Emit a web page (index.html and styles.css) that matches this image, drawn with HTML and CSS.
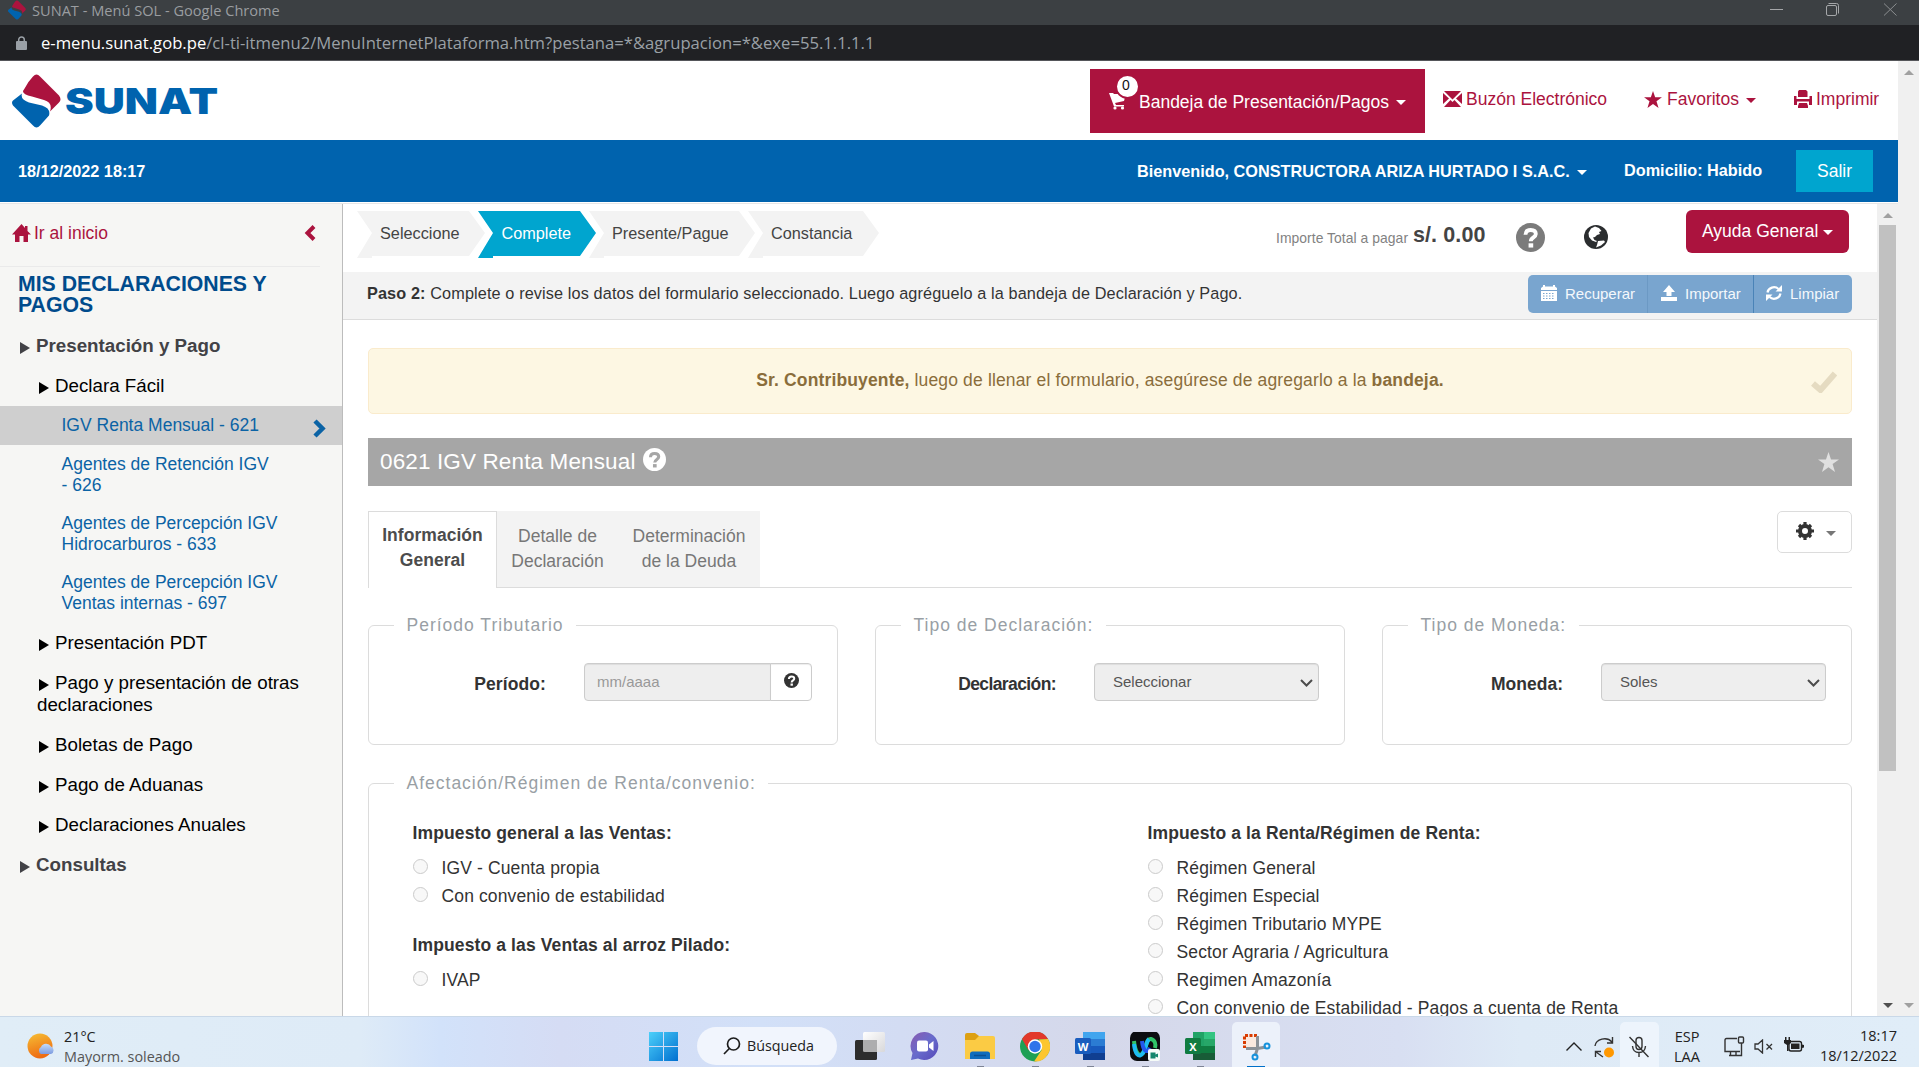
FILE: index.html
```html
<!DOCTYPE html>
<html lang="es">
<head>
<meta charset="utf-8">
<title>SUNAT - Menú SOL</title>
<link rel="stylesheet" href="styles.css">
</head>
<body>
<svg class="defs" width="0" height="0">
  <symbol id="drop" viewBox="0 0 49 53">
    <path fill="#ab133e" d="M12 15Q16 7 21 2Q24.500-2 28 2L47 21Q50 25 47 28L38 37Q41 28 32 25.500L20 22Q8 19 12 15Z"/>
    <path fill="#0063ae" d="M10 19Q8 25 17 28L30 31Q39 34 37 41L28 51Q24.500 55 21 51L1 31Q-1 28 1 26Z"/>
  </symbol>
  <symbol id="help" viewBox="0 0 30 30">
    <circle cx="15" cy="15" r="15" fill="currentColor"/>
    <path d="M9.800 12.200C9.800 8.800 12 7.200 15.200 7.200C18.400 7.200 20.500 8.800 20.500 11.500C20.500 15 15.300 14.800 15.300 19" fill="none" stroke="var(--hole)" stroke-width="4"/>
    <rect x="13" y="21" width="4.800" height="4.400" fill="var(--hole)"/>
  </symbol>
  <symbol id="star" viewBox="0 0 20 19">
    <path fill="currentColor" d="M10 0L12.400 7H20L13.900 11.500L16.200 19L10 14.500L3.800 19L6.100 11.500L0 7H7.600Z"/>
  </symbol>
</svg>

<header class="titlebar">
  <svg class="favicon" viewBox="0 0 49 53"><use href="#drop"/></svg>
  <span class="window-title">SUNAT - Menú SOL - Google Chrome</span>
  <svg class="window-buttons" viewBox="0 0 130 16" fill="none" stroke="#a5a7a9">
    <path d="M1 9.500H14" />
    <rect x="57.500" y="5.500" width="10" height="10" rx="1.500"/><path d="M59.500 3.500H67.500Q69.500 3.500 69.500 5.500V13.500"/>
    <path d="M115 3.500L127.500 15.500M127.500 3.500L115 15.500" stroke="#8b8e90"/>
  </svg>
</header>
<div class="urlbar">
  <svg class="lock" viewBox="0 0 11 14"><rect y="5" width="11" height="9" rx="1" fill="#9aa0a6"/><path d="M2.700 6V3.700A2.800 2.800 0 0 1 8.300 3.700V6" fill="none" stroke="#9aa0a6" stroke-width="1.500"/></svg>
  <span class="url"><b>e-menu.sunat.gob.pe</b>/cl-ti-itmenu2/MenuInternetPlataforma.htm?pestana=*&amp;agrupacion=*&amp;exe=55.1.1.1.1</span>
</div>

<div class="viewport">
  <div class="page">
    <div class="masthead">
      <svg class="logo" viewBox="0 0 206 55">
        <svg x="0" y="0" width="49" height="54"><use href="#drop"/></svg>
        <text x="53" y="39.500" textLength="153" lengthAdjust="spacingAndGlyphs">SUNAT</text>
      </svg>
      <div class="tray-btn">
        <svg class="cart" viewBox="0 0 18 18" fill="#fff"><path d="M0 1H4L5 2H17L15 9L6 11L7 13H15V14.500H5L3 9Z"/><circle cx="6" cy="16" r="1.600"/><circle cx="13.500" cy="16" r="1.600"/></svg>
        <span class="badge">0</span>
        <span>Bandeja de Presentación/Pagos</span><i class="caret"></i>
      </div>
      <a class="mast-link mail"><svg width="19" height="16" viewBox="0 0 19 16" fill="#ab133e"><path d="M1 0H18L9.500 8.500ZM0 2L6 7.500L0 13ZM19 2V13L13 7.500ZM1 16L7.500 9L9.500 11L11.500 9L18 16Z"/></svg>Buzón Electrónico</a>
      <a class="mast-link fav"><svg width="18" height="17"><use href="#star"/></svg>Favoritos<i class="caret"></i></a>
      <a class="mast-link print"><svg width="18" height="18" viewBox="0 0 18 18" fill="#ab133e"><path d="M5 0H12L13.500 1.500V7H4V1.500ZM0 6H2.500V9H15.500V6H18V15H15V11.500H3V15H0ZM5 13H13L14 16V18H4V16Z"/></svg>Imprimir</a>
    </div>
    <div class="userbar">
      <span class="clock">18/12/2022 18:17</span>
      <span class="welcome">Bienvenido, CONSTRUCTORA ARIZA HURTADO I S.A.C.<i class="caret"></i></span>
      <span class="domicile">Domicilio: Habido</span>
      <span class="exit">Salir</span>
    </div>
    <div class="columns">
      <nav class="sidebar">
        <div class="home"><svg width="19" height="18" viewBox="0 0 19 18" fill="#ab133e"><path d="M9.500 0L13 4V2H15.500V7L19 10.500H16V18H11.500V12H7.500V18H3V10.500H0Z"/></svg><span>Ir al inicio</span>
          <svg class="collapse" width="12" height="16" viewBox="0 0 12 16"><path d="M10 1.500L3.500 8L10 14.500" fill="none" stroke="#ab133e" stroke-width="4"/></svg></div>
        <h2>MIS DECLARACIONES Y PAGOS</h2>
        <div class="lvl1"><i class="tri"></i>Presentación y Pago</div>
        <div class="lvl2"><i class="tri"></i>Declara Fácil</div>
        <div class="lvl3 active"><span>IGV Renta Mensual - 621</span><svg width="14" height="19" viewBox="0 0 14 19"><path d="M2 2L9.500 9.500L2 17" fill="none" stroke="#0b63a5" stroke-width="4.500"/></svg></div>
        <div class="lvl3 two"><span>Agentes de Retención IGV<br>- 626</span></div>
        <div class="lvl3 two"><span>Agentes de Percepción IGV<br>Hidrocarburos - 633</span></div>
        <div class="lvl3 two"><span>Agentes de Percepción IGV<br>Ventas internas - 697</span></div>
        <div class="lvl2"><i class="tri"></i>Presentación PDT</div>
        <div class="lvl2 tall"><i class="tri"></i>Pago y presentación de otras<br>declaraciones</div>
        <div class="lvl2"><i class="tri"></i>Boletas de Pago</div>
        <div class="lvl2"><i class="tri"></i>Pago de Aduanas</div>
        <div class="lvl2"><i class="tri"></i>Declaraciones Anuales</div>
        <div class="lvl1"><i class="tri"></i>Consultas</div>
      </nav>
      <main class="content">
        <div class="wizard">
          <div class="step s1">Seleccione</div><div class="step s2 current">Complete</div><div class="step s3">Presente/Pague</div><div class="step s4">Constancia</div>
          <div class="total">Importe Total a pagar <b>s/. 0.00</b></div>
          <svg class="help-lg"><use href="#help"/></svg>
          <svg class="globe" viewBox="0 0 24 24"><circle cx="12" cy="12" r="12" fill="#2b2d2f"/><path fill="#fff" d="M7 3.500L11 1.500L15 3L17.500 6L15 7L16 9L13 10L11 12L9 12.500L10.500 15L13 16L12 17L8 15.500L5 12L4.500 8ZM14 16L20 15.500L21 17L17 20.500L12 22.500L13 20Z"/></svg>
          <div class="help-btn">Ayuda General<i class="caret"></i></div>
        </div>
        <div class="stepbar">
          <p><b>Paso 2:</b> Complete o revise los datos del formulario seleccionado. Luego agréguelo a la bandeja de Declaración y Pago.</p>
          <div class="actions">
            <span class="a1"><svg width="16" height="16" viewBox="0 0 16 16"><path fill="#fff" d="M2 0H4V1.500H12V0H14V1.500L16 3V5H0V3L2 1.500ZM0 6H16V16H0Z"/><path stroke="#79a5cf" stroke-dasharray="1.500 1.500" d="M2 8.500H14M2 11H14M2 13.500H14"/></svg>Recuperar</span>
            <span class="a2"><svg width="16" height="16" viewBox="0 0 16 16" fill="#fff"><path d="M8 0L14 7H10.500V11H5.500V7H2ZM0 12H16V16H0Z"/></svg>Importar</span>
            <span class="a3"><svg width="16" height="16" viewBox="0 0 16 16" fill="none" stroke="#fff" stroke-width="2.200"><path d="M1.500 7.500A6.500 6 0 0 1 12.500 4M14.500 8.500A6.500 6 0 0 1 3.500 12"/><path fill="#fff" stroke="none" d="M16 0V6.500H9.500ZM0 16V9.500H6.500Z"/></svg>Limpiar</span>
          </div>
        </div>
        <div class="alert"><p><b>Sr. Contribuyente,</b> luego de llenar el formulario, asegúrese de agregarlo a la <b>bandeja.</b></p>
          <svg class="check" viewBox="0 0 26 22"><path d="M2 12.500L9.500 19L24 2.500" fill="none" stroke="#e5dbc1" stroke-width="6"/></svg></div>
        <div class="form-title"><span>0621 IGV Renta Mensual</span><svg class="help-md"><use href="#help"/></svg><svg class="title-star"><use href="#star"/></svg></div>
        <div class="tabs">
          <div class="tab on">Información<br>General</div><div class="tab t2">Detalle de<br>Declaración</div><div class="tab t3">Determinación<br>de la Deuda</div>
          <div class="gear"><svg width="18" height="18" viewBox="-9 -9 18 18"><circle r="5" fill="none" stroke="#333" stroke-width="4"/><path stroke="#333" stroke-width="3.200" d="M0-9V-6M0 9V6M-9 0H-6M9 0H6M-6-6L-4.500-4.500M6 6L4.500 4.500M-6 6L-4.500 4.500M6-6L4.500-4.500"/></svg><i class="caret"></i></div>
        </div>
        <div class="boxes">
          <fieldset><legend>Período Tributario</legend><div class="field period"><label>Período:</label><div class="input">mm/aaaa</div><div class="addon"><svg width="15" height="15"><use href="#help"/></svg></div></div></fieldset>
          <fieldset><legend>Tipo de Declaración:</legend><div class="field kind"><label>Declaración:</label><div class="select">Seleccionar<svg width="13" height="8" viewBox="0 0 13 8"><path d="M1 1L6.500 6.500L12 1" fill="none" stroke="#4c4c4c" stroke-width="2"/></svg></div></div></fieldset>
          <fieldset><legend>Tipo de Moneda:</legend><div class="field"><label>Moneda:</label><div class="select">Soles<svg width="13" height="8" viewBox="0 0 13 8"><path d="M1 1L6.500 6.500L12 1" fill="none" stroke="#4c4c4c" stroke-width="2"/></svg></div></div></fieldset>
        </div>
        <fieldset class="regime"><legend>Afectación/Régimen de Renta/convenio:</legend>
          <div class="regime-cols">
            <div class="left">
              <h4>Impuesto general a las Ventas:</h4>
              <p class="opt"><i></i>IGV - Cuenta propia</p>
              <p class="opt"><i></i>Con convenio de estabilidad</p>
              <h4 class="second">Impuesto a las Ventas al arroz Pilado:</h4>
              <p class="opt"><i></i>IVAP</p>
            </div>
            <div>
              <h4>Impuesto a la Renta/Régimen de Renta:</h4>
              <p class="opt"><i></i>Régimen General</p>
              <p class="opt"><i></i>Régimen Especial</p>
              <p class="opt"><i></i>Régimen Tributario MYPE</p>
              <p class="opt"><i></i>Sector Agraria / Agricultura</p>
              <p class="opt"><i></i>Regimen Amazonía</p>
              <p class="opt"><i></i>Con convenio de Estabilidad - Pagos a cuenta de Renta</p>
            </div>
          </div>
        </fieldset>
      </main>
      <div class="scroll inner"><i class="up"></i><i class="thumb"></i><i class="down"></i></div>
    </div>
  </div>
  <div class="scroll outer"><i class="up"></i><i class="down"></i></div>
</div>

<footer class="taskbar">
  <svg class="weather" viewBox="0 0 28 26">
    <defs><linearGradient id="sun" x2="0.300" y2="1"><stop stop-color="#f6bf35"/><stop offset="1" stop-color="#ee6c12"/></linearGradient><linearGradient id="cl" x2="0" y2="1"><stop stop-color="#c4dcfa"/><stop offset="1" stop-color="#7c9be0"/></linearGradient></defs>
    <circle cx="13" cy="13" r="12.500" fill="url(#sun)"/><path fill="url(#cl)" d="M14 21A4 4 0 0 1 14 14A5.500 5 0 0 1 24 13.500A4 4 0 0 1 24 21Z"/></svg>
  <div class="weather-text">21°C<br><span>Mayorm. soleado</span></div>
  <div class="apps">
    <svg class="app win" viewBox="0 0 29 29"><defs><linearGradient id="wg" x2="1" y2="1"><stop stop-color="#4cd0fa"/><stop offset="1" stop-color="#006fd0"/></linearGradient></defs><path fill="url(#wg)" d="M0 0H14V14H0ZM15 0H29V14H15ZM0 15H14V29H0ZM15 15H29V29H15Z"/></svg>
    <div class="search"><svg width="18" height="18" viewBox="0 0 18 18" fill="none" stroke="#1c1c1c" stroke-width="1.700"><circle cx="10.500" cy="7" r="6"/><path d="M6.300 11.500L1 17"/></svg><span>Búsqueda</span></div>
    <svg class="app" viewBox="0 0 30 30"><defs><linearGradient id="tv" x2="1" y2="1"><stop stop-color="#fff"/><stop offset="1" stop-color="#d8d8da"/></linearGradient></defs><rect x="8" y="0" width="22" height="20" rx="1.500" fill="url(#tv)"/><rect x="0" y="8" width="22" height="20" rx="1.500" fill="#2d2d2d"/><path d="M8 8H22V20H9.500Q8 20 8 18.500Z" fill="#adadae"/></svg>
    <svg class="app" viewBox="0 0 30 30"><defs><linearGradient id="ch" x2="1" y2="1"><stop stop-color="#8a5ab0"/><stop offset=".5" stop-color="#686ccc"/><stop offset="1" stop-color="#5648b8"/></linearGradient></defs><path fill="url(#ch)" d="M15 0A14 14 0 1 1 8 26.500L1 28L2.500 21A14 14 0 0 1 15 0Z"/><rect x="7" y="8.500" width="11" height="11" rx="2" fill="#fff"/><path fill="#fff" d="M19 12.500L23.500 9V19L19 15.500Z"/></svg>
    <svg class="app open" viewBox="0 0 30 30"><path fill="#dda012" d="M0 3Q0 1 2 1H10L14 4V9H0Z"/><path fill="#fbcb44" d="M0 8H10L14 4H28Q30 4 30 6V27H0Z"/><path fill="#0f6cbd" d="M5 27V22Q5 19.500 7.500 19.500H22.500Q25 19.500 25 22V27Z"/><path stroke="#0a4f93" stroke-width="1.500" d="M9 23.500H21"/></svg>
    <svg class="app open" viewBox="0 0 30 30"><circle cx="15" cy="14.500" r="15" fill="#1ea055"/><path fill="#e2382b" d="M2 7A15 15 0 0 1 28 7L15 7.500L8.500 18.200Z"/><path fill="#fcc62f" d="M28 7A15 15 0 0 1 14 29.500L21.500 18.200L19 7.500Z"/><circle cx="15" cy="14.500" r="7.200" fill="#fff"/><circle cx="15" cy="14.500" r="5.700" fill="#2f74ea"/></svg>
    <svg class="app open" viewBox="0 0 30 30"><path fill="#41a5ee" d="M8 0H30V7H8Z"/><path fill="#2b7cd3" d="M8 7H30V14H8Z"/><path fill="#185abd" d="M8 14H30V21H8Z"/><path fill="#103f91" d="M8 21H30V28H8Z"/><rect y="6" width="16" height="16" rx="1.500" fill="#1a5dbe"/><text x="8" y="18.500" class="office">W</text></svg>
    <svg class="app open" viewBox="0 0 30 30"><rect y="-1" width="30" height="30" rx="7" fill="#0c0d10"/><path d="M4 9C5 20 9 26 13 21C16 17 16 6 21 7C25 8 26 12 25 16" fill="none" stroke="#31c468" stroke-width="4"/><path d="M4 12C5 22 9 27 13 21C16 17 16 10 19 7" fill="none" stroke="#1ebcf2" stroke-width="4"/><path d="M12 9C13 19 17 22 20 16" fill="none" stroke="#2357ee" stroke-width="4"/><rect x="18" y="17" width="12" height="12" rx="2" fill="#f5fbf8"/><path fill="#14866d" d="M20.500 20.500H25.500V22.500L28 21.500V25.500L25.500 24.500V26.500H20.500Z"/></svg>
    <svg class="app open" viewBox="0 0 30 30"><path fill="#21a366" d="M8 0H19V14H8Z"/><path fill="#33c481" d="M19 0H30V7H19Z"/><path fill="#27a768" d="M19 7H30V14H19Z"/><path fill="#107c41" d="M19 14H30V21H8V14Z"/><path fill="#185c37" d="M8 21H30V28H8Z"/><rect y="6" width="16" height="16" rx="1.500" fill="#107c41"/><text x="8" y="18.500" class="office">X</text></svg>
    <div class="snip"><svg width="30" height="30" viewBox="0 0 30 30" fill="none"><path d="M1 3H15V15H3Z" fill="#fae9df"/><path d="M16 3.500H3.500V16" stroke="#d83b01" stroke-width="3" stroke-dasharray="3 1.500"/><path d="M16.500 4V16.500H5M16.500 16.500L14 24M16.500 16.500L25 15" stroke="#8c9298" stroke-width="3"/><circle cx="14" cy="25" r="2.500" stroke="#1592dd" stroke-width="2"/><circle cx="26" cy="14" r="2.500" stroke="#1592dd" stroke-width="2"/></svg></div>
  </div>
  <div class="tray">
    <svg class="chev" viewBox="0 0 16 9"><path d="M.5 8.500L8 1L15.500 8.500" fill="none" stroke="#222" stroke-width="1.400"/></svg>
    <svg class="sync" viewBox="0 0 21 21" fill="none" stroke="#333" stroke-width="1.400"><path d="M1 9A9.500 8 0 0 1 18 5M18.500 0V6H13M9 20L2 15M1.500 20V14.500H7"/><circle cx="15" cy="15.500" r="5" fill="#ff9800" stroke="none"/></svg>
    <div class="mic"><svg width="20" height="22" viewBox="0 0 20 22" fill="none" stroke="#333" stroke-width="1.400"><rect x="7" y="1.500" width="6" height="12" rx="3"/><path d="M3.500 10Q4 16.500 10 16.500Q16 16.500 16.500 10M10 16.500V21M.5 1L19.500 21"/></svg></div>
    <div class="lang">ESP<br>LAA</div>
    <svg class="net" viewBox="0 0 21 21" fill="none" stroke="#333" stroke-width="1.400"><path d="M13 2.500H2.500Q1 2.500 1 4V15.500H16M5 19.500H17.500V7M6.500 16V19.500M12 16V19.500"/><rect x="14.500" y="1" width="5" height="6" rx="1"/></svg>
    <svg class="vol" viewBox="0 0 19 15" fill="none" stroke="#333" stroke-width="1.300"><path d="M1 5H4L8.500 1V14L4 10H1ZM12.500 5L18 10.500M18 5L12.500 10.500"/></svg>
    <svg class="bat" viewBox="0 0 20 16"><rect x="5" y="4.500" width="12.500" height="9.500" rx="2" fill="none" stroke="#222" stroke-width="1.400"/><rect x="7" y="6.500" width="8.500" height="5.500" fill="#222"/><path fill="#222" d="M18 7.500L20 8V10.500L18 11ZM0 3H1V0H2.500V3H4.500V0H6V3H7V6L4.500 8V14H3V8L0 6Z"/></svg>
    <div class="time">18:17<br>18/12/2022</div>
  </div>
</footer>
</body>
</html>
```
FILE: styles.css
```css
*{box-sizing:border-box}
body{margin:0;width:1919px;height:1067px;overflow:hidden;display:flex;flex-direction:column;background:#fff;color:#333;font:17.5px/25px "Liberation Sans",Arial,sans-serif}
p,h2,h4{margin:0}
svg{display:block;flex:none}
.defs{position:absolute}
.caret{display:inline-block;width:0;height:0;border:5px solid transparent;border-top-color:currentColor;border-bottom:0}

.titlebar{height:25px;flex:none;background:#3c4043;display:flex;align-items:flex-start}
.favicon{width:18px;height:20px;margin-left:8px}
.window-title{margin-left:6px;font:14.6px/21px "Open Sans","Noto Sans",sans-serif;color:#9a9da0;flex:1;white-space:nowrap}
.window-buttons{width:130px;height:16px;margin-right:20px}
.urlbar{height:36px;flex:none;background:#202124;border-bottom:1px solid #55565a;display:flex;align-items:center;padding-left:16px}
.lock{width:11px;height:14px}
.url{margin-left:14px;font:16.65px/34px "Open Sans","Noto Sans",sans-serif;color:#9aa0a6;white-space:nowrap}
.url b{font-weight:400;color:#fff}

.viewport{height:955px;flex:none;display:flex;overflow:hidden}
.page{width:1898px;flex:none;display:flex;flex-direction:column}
.masthead{height:79px;flex:none;display:flex;align-items:flex-start;color:#ab133e;white-space:nowrap}
.logo{width:206px;height:55px;margin:13px 872px 0 12px}
.logo text{font:900 36px Inter,sans-serif;fill:#0063ae}
.tray-btn{position:relative;width:335px;height:64px;margin-top:8px;background:#ab133e;color:#fff;display:flex;align-items:center;padding:2px 0 0 19px}
.tray-btn .caret{margin:1px 0 0 7px}
.cart{width:18px;height:18px;margin:-3px 12px 0 0}
.badge{position:absolute;left:25px;top:5px;width:25px;height:25px;border:2px solid #ab133e;border-radius:50%;background:#fff;color:#111;font-size:14px;line-height:19px;text-align:center;padding-right:3px}
.mast-link{display:flex;align-items:center;height:76px}
.mast-link svg{margin-right:4px}
.mail{margin-left:18px;width:201px}
.fav{width:150px}.fav svg{margin-right:5px}
.fav .caret{margin:3px 0 0 7px}

.userbar{height:63px;flex:none;background:#0063ae;border-bottom:1px solid #fff;color:#fff;font-weight:700;font-size:16.25px;display:flex;align-items:center;white-space:nowrap;padding-left:18px}
.clock{width:1119px}
.welcome{width:487px;display:flex;align-items:center}
.welcome .caret{margin:2px 0 0 7px}
.domicile{width:172px;margin-top:-1px}
.exit{width:77px;height:42px;background:#00a5cf;font-weight:400;font-size:17.5px;line-height:42px;text-align:center}

.columns{flex:1;min-height:0;display:flex;border-top:1px solid #e6e6e6}
.sidebar{width:343px;flex:none;background:#f6f6f4;border-right:1px solid #bcbcbc;color:#000;line-height:22px}
.home{display:flex;align-items:center;width:320px;height:63px;border-bottom:1px solid #eaeaea;color:#ab133e;padding:0 4px 4px 12px}
.home span{margin-left:3px;flex:1}
.sidebar h2{font-size:21.25px;line-height:21px;color:#004b8c;padding:7px 50px 0 18px;height:59px}
.lvl1,.lvl2{height:40px;display:block;padding-top:9px;white-space:nowrap;font-size:18.75px}
.lvl1{font-weight:700;color:#424246;padding-left:20px}
.lvl2{padding-left:37px}
.tall{height:62px}
.tri{display:inline-block;width:0;height:0;border:6px solid transparent;border-left:10px solid currentColor;border-right:0;margin:0 6px -2px 0}
.lvl2 .tri{margin:0 6.500px -2px 1.500px}
.lvl3{display:flex;align-items:center;color:#0b63a5;line-height:21px;padding-left:61.500px}
.lvl3.active{height:39px;background:#cfcfcf}
.active span{width:251.500px}
.active svg{margin-top:6px}
.lvl3.two{height:59.4px}

.content{width:1534px;flex:none;overflow:hidden}
.wizard{height:68px;display:flex;align-items:flex-start;padding:7px 0 0 14px;white-space:nowrap}
.step{height:47px;background:#f3f3f3;color:#444;font-size:16.25px;line-height:44px;padding-left:23px;clip-path:polygon(0 0,calc(100% - 16px) 0,100% 22px,calc(100% - 16px) 45px,15px 45px,15px 47px,0 47px,15px 22px)}
.current{background:#00a5cf;color:#fff}
.s1{width:128px;margin-right:-7px}.s2{width:118px;margin-right:-7px;padding-left:23.500px}.s3{width:166px;margin-right:-7px}.s4{width:131px}
.total{width:240px;margin:12px 0 0 397px;font-size:13.9px;color:#828282;letter-spacing:.05px}
.total b{font-size:21.500px;color:#444;vertical-align:1px;margin-left:1px;letter-spacing:.1px}
.help-lg{width:29px;height:29px;margin:12px 0 0 0;color:#7b7b7b;--hole:#fff}
.globe{width:24px;height:24px;margin:14px 0 0 39px}
.help-btn{width:163px;height:43px;margin:-1px 0 0 78px;border-radius:6px;background:#ab133e;color:#fff;display:flex;align-items:center;padding-left:16px}
.help-btn .caret{margin:2px 0 0 5px}
.stepbar{height:48px;background:#f3f3f3;border-bottom:1px solid #dcdcdc;display:flex;padding:3px 25px 0 24px;justify-content:space-between;font-size:16.25px;line-height:37px;white-space:nowrap}
.stepbar p{letter-spacing:.117px}
.actions{display:flex;height:38px;border-radius:5px;overflow:hidden;background:#79a5cf;color:#f4f8fc;font-size:15px}
.actions span{display:flex;align-items:center;padding:0 0 1px 13px}
.actions svg{margin:-2px 8px 0 0}
.a1{width:120px;border-right:1px solid #6c99c4}.a2{width:106px;border-right:1px solid #4a83b7}.a3{width:98px}
.actions .a3{padding-left:12px}
.alert{margin:28px 25px 0;height:66px;border:1px solid #faebcc;border-radius:5px;background:#fdf7e3;color:#8a6d3b;display:flex;align-items:center}
.alert p{flex:1;text-align:center;padding:0 0 2px 20px;letter-spacing:.145px}
.check{width:26px;height:22px;margin:2px 14px 0 0}
.form-title{margin:24px 25px 0;height:48px;background:#a6a6a6;color:#fff;font-size:22.5px;letter-spacing:.13px;display:flex;align-items:center;padding:0 13px 1px 12px}
.help-md{width:23px;height:23px;margin:-4px auto 0 7px;--hole:#a6a6a6}
.title-star{width:21px;height:20px;color:#e0e0e0}
.tabs{margin:25px 25px 0;height:77px;display:flex;border-bottom:1px solid #dcdcdc;text-align:center;color:#777}
.tab{height:76px;padding-top:12.500px;background:#f3f3f3}
.on{width:129px;height:77px;padding-top:11px;background:#fff;border:1px solid #dcdcdc;border-bottom:0;font-weight:700;color:#4c4c4c;letter-spacing:.05px}
.t2{width:121px}.t3{width:142px}
.gear{margin-left:auto;width:75px;height:42px;border:1px solid #dcdcdc;border-radius:5px;display:flex;align-items:center;justify-content:center;gap:12px;padding:0 0 2px 2px}
.gear .caret{margin-top:4px}
fieldset{margin:0;padding:0;min-width:0;width:470px;height:132px;border:1px solid #dcdcdc;border-radius:6px}
.boxes,.regime{margin:0 25px}
.boxes{display:flex;gap:37px;margin-top:25px}
legend{margin-left:25px;padding:0 12.500px;letter-spacing:1px;color:#999fa5;line-height:25px;height:25px}
.field{display:flex;padding-top:25px}
.field label{width:180px;text-align:right;font-weight:700;line-height:42px;height:38px;margin-right:38px}
.period label{width:177px;letter-spacing:.1px}
.kind label{letter-spacing:-.6px}
.input,.select,.addon{height:38px;border:1px solid #ccc;background:#eee;font-size:15px;line-height:35px;box-shadow:inset 0 1px 1px rgba(0,0,0,.075)}
.input{width:187px;padding-left:12px;color:#999;border-radius:4px 0 0 4px}
.addon{width:42px;margin-left:-1px;background:#fff;border-radius:0 4px 4px 0;padding:9px 0 0 12.500px;--hole:#fff}
.select{width:225px;border-radius:4px;padding:0 5px 1px 18px;color:#555;display:flex;align-items:center;justify-content:space-between}
.select svg{margin-top:2px}
.regime.regime{width:1484px;height:300px;margin-top:26px}
.regime-cols{display:flex;padding:25px 0 0 43.500px}
.left{width:735px}
h4{font-size:17.5px;line-height:25px;height:33px;letter-spacing:.12px}
.second{margin-top:23px;height:33px}
.opt{display:flex;align-items:center;height:28.150px;white-space:nowrap;line-height:25px;letter-spacing:.13px}
.opt i{width:15px;height:15px;border:1px solid #cbcbcb;border-radius:50%;background:#f8f8f8;margin:-4px 14px 0 0}

.scroll{width:21px;flex:none;background:#f0f0f0;display:flex;flex-direction:column;align-items:center}
.up,.down{width:0;height:0;border:5px solid transparent}
.up{border-bottom-color:#a0a0a0;border-top:0}
.down{border-top-color:#a0a0a0;border-bottom:0;margin-top:auto;margin-bottom:8px}
.inner .up{margin-top:9px}.inner .down{border-top-color:#505050}
.inner .thumb{width:17px;height:546px;margin-top:7px;background:#c1c1c1}
.outer .up{margin-top:9px}

.taskbar{height:51px;flex:none;border-top:1px solid #c9d8e8;background:linear-gradient(90deg,#e0edf7 0,#deebf7 360px,#d2e2fa 440px,#d5dcf4 560px,#d2e0f8 760px,#d3dcf3 900px,#d5d8ea 1100px,#d8dff2 1400px,#deeaf6 1520px,#e0edf8);display:flex;align-items:flex-start;color:#222;font:14.5px/20px "Open Sans","Noto Sans",sans-serif;white-space:nowrap}
.weather{width:28px;height:26px;margin:16px 0 0 27px}
.weather-text{margin:10px 0 0 9px;width:585px;font-size:14.4px}
.weather-text span{color:#555}
.apps{width:631px;display:flex;align-items:flex-start}
.app{width:30px;height:30px;margin:15px 0 0 25px}
.app.win{width:29px;height:29px;margin-left:0}
.search{width:142px;height:38px;margin:10px -8px 0 19px;border-radius:19px;background:#f1f5fd;display:flex;align-items:center;padding-left:26px}
.search span{margin-left:6px;font-size:14.3px}
.office{font:700 11px "Open Sans",sans-serif;fill:#fff;text-anchor:middle}
.app.open{height:36px;padding-bottom:6px;background:linear-gradient(#7d8496,#7d8496) 50% 100%/7px 2px no-repeat}
.snip{width:48px;height:46px;margin:5px 0 0 17px;border-radius:5px 5px 0 0;background:linear-gradient(#0070c9,#0070c9) 50% 100%/18px 2px no-repeat,#ecf1fa;padding:10px 9px}
.search+.app{margin-left:26px}
.tray{display:flex;margin-left:286px}
.chev{width:16px;height:9px;margin:25px 0 0}
.sync{width:21px;height:21px;margin:20px 0 0 12px}
.mic{width:39px;height:46px;margin:5px 0 0 5px;border-radius:5px 5px 0 0;background:#edf4fc;padding:14px 9px}
.lang{width:54px;text-align:center;margin:10px 0 0 1px}
.net{width:21px;height:21px;margin:19px 0 0 10px}
.vol{width:19px;height:15px;margin:22px 0 0 9px}
.bat{width:20px;height:16px;margin:20px 0 0 11px}
.time{width:93px;text-align:right;margin-top:9px}
```
